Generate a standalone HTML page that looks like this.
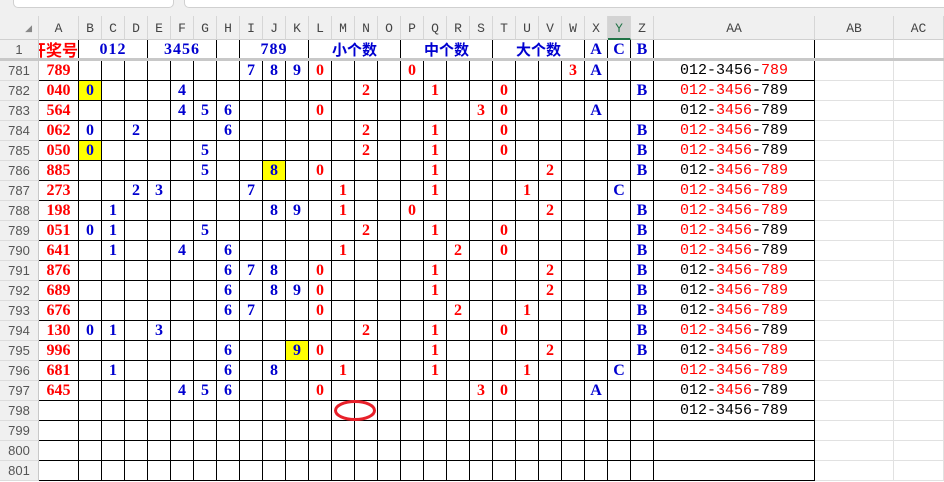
<!DOCTYPE html>
<html><head><meta charset="utf-8"><style>
*{margin:0;padding:0;box-sizing:border-box}
body{width:944px;height:482px;overflow:hidden;background:#fff;position:relative;font-family:"Liberation Mono",monospace}
.top{position:absolute;left:0;top:0;width:944px;height:16px;background:#f0f0f0}
.tb{position:absolute;top:-6px;height:14px;background:#fff;border:1px solid #d0d0d0;border-radius:5px}
.r{position:absolute;left:0;display:flex;height:20px}
.r>*{flex:none;width:23px;height:20px;border-right:1px solid #000;border-bottom:1px solid #000;text-align:center;line-height:20px;font-weight:bold;font-size:16px;font-style:normal;font-family:"Liberation Serif",serif}
.r>:nth-child(1){width:39px;background:#f0f0f0;border-right:1px solid #c8c8c8;border-bottom:1px solid #dcdcdc;font-family:"Liberation Sans",sans-serif;font-weight:normal;color:#555;font-size:13px;line-height:20px}
.r>:nth-child(2){width:40px;color:#f00}
.r>:nth-child(28){width:161px;font-weight:normal;font-size:15px;font-family:"Liberation Mono",monospace;line-height:19px}
.r>:nth-child(29){width:79px;border-color:#e1e1e1}
.r>:nth-child(30){width:50px;border-color:#e1e1e1}
.u{color:#0000d0}.k{color:#f00}.y{background:#ff0;color:#0000d0}
.R{color:#f00}
.h{position:absolute;left:0;top:16px;height:24px;display:flex;background:#f0f0f0}
.h>div{flex:none;width:23px;height:24px;border-right:1px solid #d6d6d6;border-bottom:1px solid #d0d0d0;text-align:center;line-height:26px;font-size:13px;color:#444}
.h1{position:absolute;left:0;top:40px;height:19px;display:flex}
.h1>div{flex:none;height:19px;border-right:1px solid #000;text-align:center;line-height:19px;font-weight:bold;color:#0000d0;font-size:16px;font-family:"Liberation Serif","Noto Sans CJK SC",serif;overflow:hidden;white-space:nowrap}
.sep{position:absolute;left:0;top:58px;width:944px;height:3px;background:#c8c8c8}
</style></head><body>
<div class="top"><div class="tb" style="left:13px;width:161px"></div><div class="tb" style="left:184px;width:770px"></div></div>
<div class="h">
<div style="width:39px;font-size:9px;color:#888;text-align:right;padding-right:6px">◢</div>
<div style="width:40px">A</div><div>B</div><div>C</div><div>D</div><div>E</div><div>F</div><div>G</div><div>H</div><div>I</div><div>J</div><div>K</div><div>L</div><div>M</div><div>N</div><div>O</div><div>P</div><div>Q</div><div>R</div><div>S</div><div>T</div><div>U</div><div>V</div><div>W</div><div>X</div><div style="background:#d3d3d3;color:#217346;border-bottom:2px solid #217346">Y</div><div>Z</div><div style="width:161px">AA</div><div style="width:79px">AB</div><div style="width:50px">AC</div>
</div>
<div class="h1">
<div style="width:39px;background:#f0f0f0;border-right:1px solid #c8c8c8;color:#555;font-weight:normal;font-family:'Liberation Sans',sans-serif;font-size:13px;line-height:20px">1</div>
<div style="width:40px;color:#f00;font-family:'Noto Sans CJK SC',sans-serif;font-size:16px;text-align:right;direction:rtl">开奖号</div>
<div style="width:69px;letter-spacing:1px">012</div><div style="width:69px;letter-spacing:1px">3456</div><div style="width:23px"></div><div style="width:69px;letter-spacing:1px">789</div>
<div style="width:92px;font-family:'Noto Sans CJK SC',sans-serif;font-size:15px">小个数</div><div style="width:92px;font-family:'Noto Sans CJK SC',sans-serif;font-size:15px">中个数</div><div style="width:92px;font-family:'Noto Sans CJK SC',sans-serif;font-size:15px">大个数</div>
<div style="width:23px">A</div><div style="width:23px">C</div><div style="width:23px">B</div><div style="width:161px"></div><div style="width:79px;border-color:#e1e1e1"></div><div style="width:50px;border-color:#e1e1e1"></div>
</div>
<div class="sep"></div>

<div class="r" style="top:61px"><i>781</i><i>789</i><i></i><i></i><i></i><i></i><i></i><i></i><i></i><i class=u>7</i><i class=u>8</i><i class=u>9</i><i class=k>0</i><i></i><i></i><i></i><i class=k>0</i><i></i><i></i><i></i><i></i><i></i><i></i><i class=k>3</i><i class=u>A</i><i></i><i></i><i>012-3456-<span class=R>789</span></i><i></i><i></i></div>
<div class="r" style="top:81px"><i>782</i><i>040</i><i class=y>0</i><i></i><i></i><i></i><i class=u>4</i><i></i><i></i><i></i><i></i><i></i><i></i><i></i><i class=k>2</i><i></i><i></i><i class=k>1</i><i></i><i></i><i class=k>0</i><i></i><i></i><i></i><i></i><i></i><i class=u>B</i><i><span class=R>012-3456</span>-789</i><i></i><i></i></div>
<div class="r" style="top:101px"><i>783</i><i>564</i><i></i><i></i><i></i><i></i><i class=u>4</i><i class=u>5</i><i class=u>6</i><i></i><i></i><i></i><i class=k>0</i><i></i><i></i><i></i><i></i><i></i><i></i><i class=k>3</i><i class=k>0</i><i></i><i></i><i></i><i class=u>A</i><i></i><i></i><i>012-<span class=R>3456</span>-789</i><i></i><i></i></div>
<div class="r" style="top:121px"><i>784</i><i>062</i><i class=u>0</i><i></i><i class=u>2</i><i></i><i></i><i></i><i class=u>6</i><i></i><i></i><i></i><i></i><i></i><i class=k>2</i><i></i><i></i><i class=k>1</i><i></i><i></i><i class=k>0</i><i></i><i></i><i></i><i></i><i></i><i class=u>B</i><i><span class=R>012-3456</span>-789</i><i></i><i></i></div>
<div class="r" style="top:141px"><i>785</i><i>050</i><i class=y>0</i><i></i><i></i><i></i><i></i><i class=u>5</i><i></i><i></i><i></i><i></i><i></i><i></i><i class=k>2</i><i></i><i></i><i class=k>1</i><i></i><i></i><i class=k>0</i><i></i><i></i><i></i><i></i><i></i><i class=u>B</i><i><span class=R>012-3456</span>-789</i><i></i><i></i></div>
<div class="r" style="top:161px"><i>786</i><i>885</i><i></i><i></i><i></i><i></i><i></i><i class=u>5</i><i></i><i></i><i class=y>8</i><i></i><i class=k>0</i><i></i><i></i><i></i><i></i><i class=k>1</i><i></i><i></i><i></i><i></i><i class=k>2</i><i></i><i></i><i></i><i class=u>B</i><i>012-<span class=R>3456-789</span></i><i></i><i></i></div>
<div class="r" style="top:181px"><i>787</i><i>273</i><i></i><i></i><i class=u>2</i><i class=u>3</i><i></i><i></i><i></i><i class=u>7</i><i></i><i></i><i></i><i class=k>1</i><i></i><i></i><i></i><i class=k>1</i><i></i><i></i><i></i><i class=k>1</i><i></i><i></i><i></i><i class=u>C</i><i></i><i class=R>012-3456-789</i><i></i><i></i></div>
<div class="r" style="top:201px"><i>788</i><i>198</i><i></i><i class=u>1</i><i></i><i></i><i></i><i></i><i></i><i></i><i class=u>8</i><i class=u>9</i><i></i><i class=k>1</i><i></i><i></i><i class=k>0</i><i></i><i></i><i></i><i></i><i></i><i class=k>2</i><i></i><i></i><i></i><i class=u>B</i><i class=R>012-3456-789</i><i></i><i></i></div>
<div class="r" style="top:221px"><i>789</i><i>051</i><i class=u>0</i><i class=u>1</i><i></i><i></i><i></i><i class=u>5</i><i></i><i></i><i></i><i></i><i></i><i></i><i class=k>2</i><i></i><i></i><i class=k>1</i><i></i><i></i><i class=k>0</i><i></i><i></i><i></i><i></i><i></i><i class=u>B</i><i><span class=R>012-3456</span>-789</i><i></i><i></i></div>
<div class="r" style="top:241px"><i>790</i><i>641</i><i></i><i class=u>1</i><i></i><i></i><i class=u>4</i><i></i><i class=u>6</i><i></i><i></i><i></i><i></i><i class=k>1</i><i></i><i></i><i></i><i></i><i class=k>2</i><i></i><i class=k>0</i><i></i><i></i><i></i><i></i><i></i><i class=u>B</i><i><span class=R>012-3456</span>-789</i><i></i><i></i></div>
<div class="r" style="top:261px"><i>791</i><i>876</i><i></i><i></i><i></i><i></i><i></i><i></i><i class=u>6</i><i class=u>7</i><i class=u>8</i><i></i><i class=k>0</i><i></i><i></i><i></i><i></i><i class=k>1</i><i></i><i></i><i></i><i></i><i class=k>2</i><i></i><i></i><i></i><i class=u>B</i><i>012-<span class=R>3456-789</span></i><i></i><i></i></div>
<div class="r" style="top:281px"><i>792</i><i>689</i><i></i><i></i><i></i><i></i><i></i><i></i><i class=u>6</i><i></i><i class=u>8</i><i class=u>9</i><i class=k>0</i><i></i><i></i><i></i><i></i><i class=k>1</i><i></i><i></i><i></i><i></i><i class=k>2</i><i></i><i></i><i></i><i class=u>B</i><i>012-<span class=R>3456-789</span></i><i></i><i></i></div>
<div class="r" style="top:301px"><i>793</i><i>676</i><i></i><i></i><i></i><i></i><i></i><i></i><i class=u>6</i><i class=u>7</i><i></i><i></i><i class=k>0</i><i></i><i></i><i></i><i></i><i></i><i class=k>2</i><i></i><i></i><i class=k>1</i><i></i><i></i><i></i><i></i><i class=u>B</i><i>012-<span class=R>3456-789</span></i><i></i><i></i></div>
<div class="r" style="top:321px"><i>794</i><i>130</i><i class=u>0</i><i class=u>1</i><i></i><i class=u>3</i><i></i><i></i><i></i><i></i><i></i><i></i><i></i><i></i><i class=k>2</i><i></i><i></i><i class=k>1</i><i></i><i></i><i class=k>0</i><i></i><i></i><i></i><i></i><i></i><i class=u>B</i><i><span class=R>012-3456</span>-789</i><i></i><i></i></div>
<div class="r" style="top:341px"><i>795</i><i>996</i><i></i><i></i><i></i><i></i><i></i><i></i><i class=u>6</i><i></i><i></i><i class=y>9</i><i class=k>0</i><i></i><i></i><i></i><i></i><i class=k>1</i><i></i><i></i><i></i><i></i><i class=k>2</i><i></i><i></i><i></i><i class=u>B</i><i>012-<span class=R>3456-789</span></i><i></i><i></i></div>
<div class="r" style="top:361px"><i>796</i><i>681</i><i></i><i class=u>1</i><i></i><i></i><i></i><i></i><i class=u>6</i><i></i><i class=u>8</i><i></i><i></i><i class=k>1</i><i></i><i></i><i></i><i class=k>1</i><i></i><i></i><i></i><i class=k>1</i><i></i><i></i><i></i><i class=u>C</i><i></i><i class=R>012-3456-789</i><i></i><i></i></div>
<div class="r" style="top:381px"><i>797</i><i>645</i><i></i><i></i><i></i><i></i><i class=u>4</i><i class=u>5</i><i class=u>6</i><i></i><i></i><i></i><i class=k>0</i><i></i><i></i><i></i><i></i><i></i><i></i><i class=k>3</i><i class=k>0</i><i></i><i></i><i></i><i class=u>A</i><i></i><i></i><i>012-<span class=R>3456</span>-789</i><i></i><i></i></div>
<div class="r" style="top:401px"><i>798</i><i></i><i></i><i></i><i></i><i></i><i></i><i></i><i></i><i></i><i></i><i></i><i></i><i></i><i></i><i></i><i></i><i></i><i></i><i></i><i></i><i></i><i></i><i></i><i></i><i></i><i></i><i>012-3456-789</i><i></i><i></i></div>
<div class="r" style="top:421px"><i>799</i><i></i><i></i><i></i><i></i><i></i><i></i><i></i><i></i><i></i><i></i><i></i><i></i><i></i><i></i><i></i><i></i><i></i><i></i><i></i><i></i><i></i><i></i><i></i><i></i><i></i><i></i><i></i><i></i><i></i></div>
<div class="r" style="top:441px"><i>800</i><i></i><i></i><i></i><i></i><i></i><i></i><i></i><i></i><i></i><i></i><i></i><i></i><i></i><i></i><i></i><i></i><i></i><i></i><i></i><i></i><i></i><i></i><i></i><i></i><i></i><i></i><i></i><i></i><i></i></div>
<div class="r" style="top:461px"><i>801</i><i></i><i></i><i></i><i></i><i></i><i></i><i></i><i></i><i></i><i></i><i></i><i></i><i></i><i></i><i></i><i></i><i></i><i></i><i></i><i></i><i></i><i></i><i></i><i></i><i></i><i></i><i></i><i></i><i></i></div>

<svg style="position:absolute;left:0;top:0" width="944" height="482"><ellipse cx="355" cy="410.5" rx="19.5" ry="9" fill="none" stroke="#e8202a" stroke-width="3"/></svg>
</body></html>
